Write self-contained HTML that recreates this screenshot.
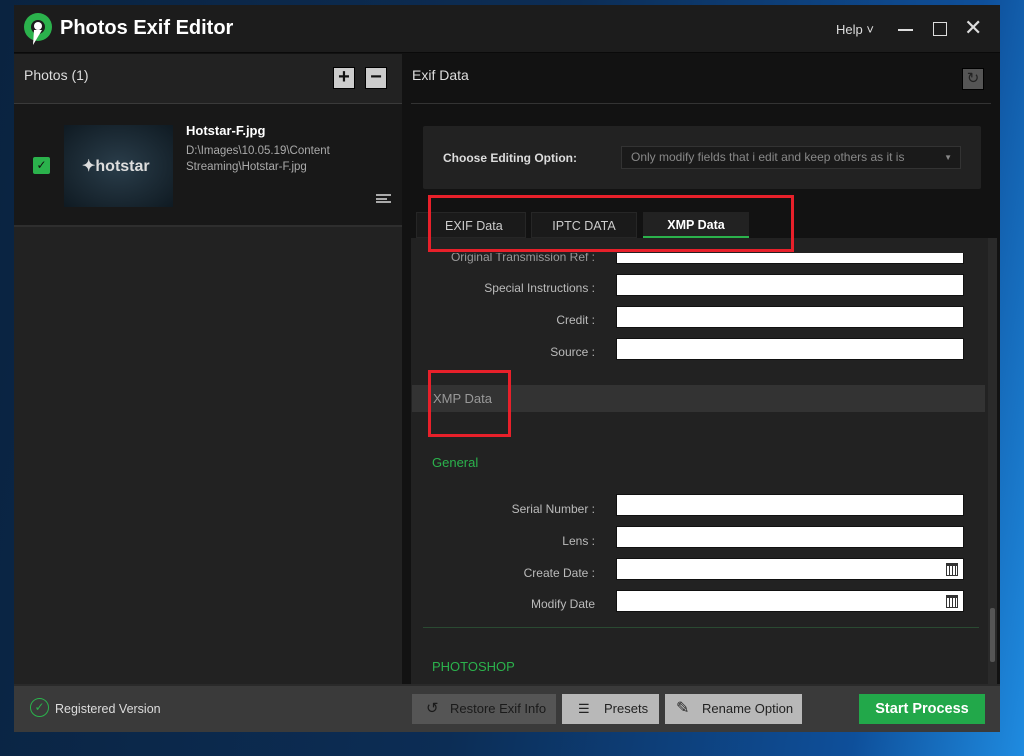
<!DOCTYPE html>
<html><head><meta charset="utf-8"><style>
*{margin:0;padding:0;box-sizing:border-box}
body{width:1024px;height:756px;overflow:hidden;position:relative;font-family:"Liberation Sans",sans-serif;background:linear-gradient(100deg,#0a2340 0%,#0c2d55 50%,#0e4f9a 85%,#1f8be0 100%)}
.a{position:absolute}
.lbl{position:absolute;color:#bbb;font-size:12px;text-align:right;width:200px;left:395px}
.fld{position:absolute;left:616px;width:348px;height:22px;background:#fff;border:1px solid #111}
.cal{position:absolute;right:5px;top:4px;width:12px;height:13px;border:1.5px solid #333;border-top-width:3px;background:repeating-linear-gradient(90deg,#fff 0 2px,#333 2px 3px)}
.btn{position:absolute;top:694px;height:30px;font-size:13px;color:#222;line-height:30px}
</style></head><body>
<div class="a" style="left:14px;top:5px;width:986px;height:727px;background:#121212"></div>
<div class="a" style="left:14px;top:5px;width:986px;height:48px;background:#1c1c1c;border-bottom:1px solid #0a0a0a"></div>
<svg class="a" style="left:23px;top:12px" width="30" height="34" viewBox="0 0 30 34"><circle cx="15" cy="15" r="14" fill="#2bb24c"/><circle cx="15" cy="15" r="7" fill="#1c1c1c"/><circle cx="15" cy="14" r="4" fill="#fff"/><path d="M11 18 L19 18 L10 33 Z" fill="#fff"/></svg>
<div class="a" style="left:60px;top:17px;color:#fff;font-size:20px;font-weight:bold">Photos Exif Editor</div>
<div class="a" style="left:836px;top:22px;color:#ddd;font-size:13px">Help ˅</div>
<div class="a" style="left:898px;top:29px;width:15px;height:1.5px;background:#ddd"></div>
<div class="a" style="left:933px;top:22px;width:14px;height:14px;border:1.5px solid #ddd"></div>
<div class="a" style="left:964px;top:15px;color:#ddd;font-size:22px">✕</div>
<div class="a" style="left:14px;top:54px;width:388px;height:630px;background:#222"></div>
<div class="a" style="left:24px;top:67px;color:#ddd;font-size:14px">Photos (1)</div>
<div class="a" style="left:333px;top:67px;width:22px;height:22px;background:#ccc;border:1px solid #000;color:#111;font-size:20px;line-height:19px;text-align:center;font-weight:bold">+</div>
<div class="a" style="left:365px;top:67px;width:22px;height:22px;background:#ccc;border:1px solid #000;color:#111;font-size:20px;line-height:19px;text-align:center;font-weight:bold">−</div>
<div class="a" style="left:14px;top:103px;width:388px;height:1px;background:#3a3a3a"></div>
<div class="a" style="left:14px;top:104px;width:388px;height:123px;background:#181818;border-bottom:2px solid #2e2e2e"></div>
<div class="a" style="left:33px;top:157px;width:17px;height:17px;background:#2bb24c;border-radius:2px;color:#111;font-size:12px;text-align:center;line-height:17px">✓</div>
<div class="a" style="left:64px;top:125px;width:109px;height:82px;background:radial-gradient(#2a3d4a,#0f1a22)"></div>
<div class="a" style="left:82px;top:156px;color:#ddd;font-size:16px;font-weight:bold">✦hotstar</div>
<div class="a" style="left:186px;top:123px;color:#fff;font-size:13px;font-weight:bold">Hotstar-F.jpg</div>
<div class="a" style="left:186px;top:143px;color:#aaa;font-size:11.5px;line-height:16px">D:\Images\10.05.19\Content<br>Streaming\Hotstar-F.jpg</div>
<div class="a" style="left:376px;top:194px;width:15px;height:9px;border-top:2px solid #aaa;border-bottom:2px solid #aaa"></div>
<div class="a" style="left:376px;top:198px;width:11px;height:2px;background:#aaa"></div>
<div class="a" style="left:412px;top:67px;color:#ddd;font-size:14px">Exif Data</div>
<div class="a" style="left:962px;top:68px;width:22px;height:22px;background:#555;border:1px solid #000;color:#222;font-size:15px;text-align:center;line-height:20px">↻</div>
<div class="a" style="left:411px;top:103px;width:580px;height:1px;background:#333"></div>
<div class="a" style="left:423px;top:126px;width:558px;height:63px;background:#222;border-radius:2px"></div>
<div class="a" style="left:443px;top:151px;color:#ddd;font-size:12px;font-weight:bold">Choose Editing Option:</div>
<div class="a" style="left:621px;top:146px;width:340px;height:23px;background:#1a1a1a;border:1px solid #333;color:#888;font-size:12px;line-height:21px;padding-left:9px">Only modify fields that i edit and keep others as it is<span style="position:absolute;right:8px;font-size:8px">▼</span></div>
<div class="a" style="left:416px;top:212px;width:110px;height:26px;background:#1a1a1a;border:1px solid #262626;color:#ccc;font-size:12.5px;line-height:26px;padding-left:28px">EXIF Data</div>
<div class="a" style="left:531px;top:212px;width:106px;height:26px;background:#1a1a1a;border:1px solid #262626;color:#ccc;font-size:12.5px;line-height:26px;text-align:center">IPTC DATA</div>
<div class="a" style="left:643px;top:212px;width:106px;height:26px;background:#222;border-bottom:2px solid #2bb24c;color:#fff;font-size:12.5px;font-weight:bold;line-height:26px;text-align:center">XMP Data</div>
<div class="a" style="left:411px;top:238px;width:577px;height:446px;background:#222"></div>
<div class="a" style="left:988px;top:238px;width:9px;height:446px;background:#2a2a2a"></div>
<div class="a" style="left:990px;top:608px;width:5px;height:54px;background:#555;border-radius:2px"></div>
<div class="lbl" style="top:250px;color:#999">Original Transmission Ref :</div>
<div class="fld" style="top:242px"></div>
<div class="a" style="left:411px;top:238px;width:577px;height:15px;background:#222"></div>
<div class="lbl" style="top:281px">Special Instructions :</div><div class="fld" style="top:274px"></div>
<div class="lbl" style="top:313px">Credit :</div><div class="fld" style="top:306px"></div>
<div class="lbl" style="top:345px">Source :</div><div class="fld" style="top:338px"></div>
<div class="a" style="left:412px;top:385px;width:573px;height:27px;background:#333;color:#999;font-size:13px;line-height:27px;padding-left:21px">XMP Data</div>
<div class="a" style="left:432px;top:455px;color:#2bb24c;font-size:13px">General</div>
<div class="lbl" style="top:502px">Serial Number :</div><div class="fld" style="top:494px"></div>
<div class="lbl" style="top:534px">Lens :</div><div class="fld" style="top:526px"></div>
<div class="lbl" style="top:566px">Create Date :</div><div class="fld" style="top:558px"><div class="cal"></div></div>
<div class="lbl" style="top:597px">Modify Date</div><div class="fld" style="top:590px"><div class="cal"></div></div>
<div class="a" style="left:423px;top:627px;width:556px;height:1px;background:#2a4a32"></div>
<div class="a" style="left:432px;top:659px;color:#2bb24c;font-size:13px">PHOTOSHOP</div>
<div class="a" style="left:428px;top:195px;width:366px;height:57px;border:3px solid #e8202a"></div>
<div class="a" style="left:428px;top:370px;width:83px;height:67px;border:3px solid #e8202a"></div>
<div class="a" style="left:14px;top:684px;width:986px;height:48px;background:#3a3a3a;border-top:2px solid #2a2a2a"></div>
<div class="a" style="left:30px;top:698px;width:19px;height:19px;border:1.5px solid #2bb24c;border-radius:50%;color:#2bb24c;font-size:12px;text-align:center;line-height:16px">✓</div>
<div class="a" style="left:55px;top:702px;color:#ddd;font-size:12.5px">Registered Version</div>
<div class="btn" style="left:412px;width:144px;background:#555;padding-left:38px;color:#1a1a1a">Restore Exif Info<span style="position:absolute;left:14px;font-size:15px">↺</span></div>
<div class="btn" style="left:562px;width:97px;background:#b8b8b8;padding-left:42px">Presets<span style="position:absolute;left:16px;font-size:13px">☰</span></div>
<div class="btn" style="left:665px;width:137px;background:#b8b8b8;padding-left:37px">Rename Option<span style="position:absolute;left:11px;font-size:16px">✎</span></div>
<div class="btn" style="left:859px;width:126px;background:#22a84a;color:#fff;font-size:14.5px;font-weight:bold;text-align:center">Start Process</div>
</body></html>
